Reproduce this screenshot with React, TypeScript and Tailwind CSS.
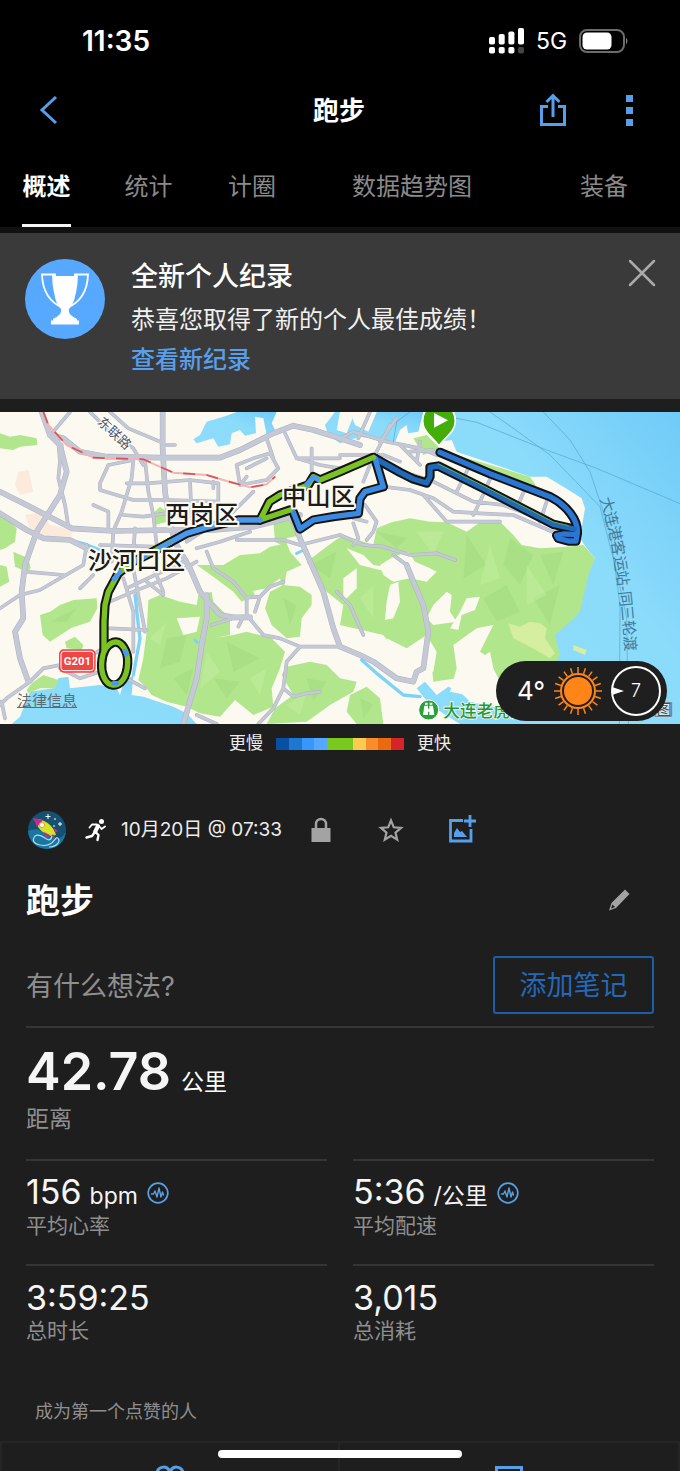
import React from "react";

const casing = "#141414";

const greens = [
  "M0 85 L30 95 60 90 110 100 112 120 60 125 40 135 0 130Z",
  "M0 335 L25 345 50 370 45 410 15 430 0 435Z M40 440 L85 460 92 490 80 500 45 485Z",
  "M455 330 L480 305 500 320 500 350 465 360Z",
  "M0 480 L20 485 28 530 0 545Z",
  "M120 630 L150 620 180 600 220 585 290 580 292 610 270 650 215 668 150 710 128 690Z",
  "M195 710 L225 695 250 720 245 735 200 730Z",
  "M80 855 L95 835 130 810 175 825 165 850 120 850 85 865Z",
  "M445 585 L480 570 540 590 590 600 595 570 635 560 640 590 690 640 690 690 640 700 700 690 740 680 815 700 855 740 840 790 815 850 820 905 760 930 705 885 660 935 600 925 560 905 500 890 455 870 440 850 415 825 430 760 440 680Z",
  "M670 480 L720 450 780 445 810 425 860 415 870 440 905 480 860 500 850 560 840 520 800 550 750 560 690 500Z",
  "M590 480 L680 480 750 540 765 570 725 590 700 560 640 515Z",
  "M810 560 L850 540 900 545 935 570 935 600 905 640 900 695 860 700 815 660 795 610Z",
  "M820 350 L900 345 905 390 860 400 860 430 825 410Z",
  "M920 470 L1000 410 1030 390 1120 420 1130 370 1175 352 1230 340 1290 350 1340 352 1400 380 1440 352 1500 350 1540 390 1565 420 1620 430 1700 425 1750 420 1785 460 1765 510 1740 620 1700 660 1665 690 1680 750 1640 820 1500 830 1480 790 1470 740 1440 760 1370 820 1300 830 1295 780 1270 720 1200 760 1150 690 1020 660 1030 600 980 560Z",
  "M860 785 L930 770 980 780 1020 820 1070 830 1060 860 990 900 920 950 800 957 825 910 880 870 845 810Z",
  "M1050 870 L1100 845 1140 880 1150 957 1070 957 1040 920Z",
  "M1240 100 L1280 90 1320 130 1270 150Z M1370 150 L1590 215 1610 245 1560 240 1430 185Z",
];

const clearings = [
  "M1140 480 L1180 455 1225 440 1245 470 1290 490 1310 500 1280 530 1230 520 1180 530 1150 510Z",
  "M1340 560 L1355 570 1350 620 1370 650 1300 660 1280 640 1300 600Z",
  "M1400 580 L1440 575 1425 615 1385 630 1375 675 1350 670 1380 620Z",
  "M1170 540 L1195 530 1200 590 1180 640 1155 645 1160 590Z",
  "M1360 720 L1430 670 1480 660 1460 700 1440 740 1470 760 1470 830 1400 870 1350 860 1370 790Z",
  "M1160 700 L1220 730 1280 690 1310 740 1300 800 1260 810 1180 780Z",
  "M1040 430 L1090 450 1120 480 1180 490 1160 500 1080 480Z",
  "M530 640 L600 635 590 680 550 690Z",
  "M1030 520 L1070 490 1070 550 1030 590Z",
];

const majorRoads = [
  "M125 21 L150 90 180 120 200 200 180 270 110 380 75 480 65 560 70 640 45 680 60 760 85 830",
  "M150 90 L190 100 240 140 320 155 480 158 660 158 720 135 820 85 880 62 940 75 1020 100 1080 120",
  "M488 21 L488 130 495 260 510 360 530 420 570 490 600 560 660 630 700 637 750 637",
  "M620 570 L620 640 605 720 590 820 550 957",
  "M0 260 L80 300 215 370 340 378 500 375 640 375 760 365 900 330",
  "M0 325 L80 375 130 400 210 405 300 450",
  "M1220 480 L1240 530 1270 600 1285 680 1270 790 1250 800 1240 830 1190 820 1120 770 1080 750 1020 725 1000 670 970 560 900 400 870 320",
];

const roads = [
  "M210 21 L160 80 M270 21 L330 80 400 130 430 180 M330 21 L385 70 480 110",
  "M185 120 L175 220 195 300 205 365 M175 110 L180 170",
  "M400 165 L395 220 365 320 340 378 335 470 M435 165 L445 260 460 330 470 420",
  "M300 235 L325 180 400 165 M300 235 L300 255 400 285 510 285 650 290 M380 235 L440 235 570 225 655 235 655 320",
  "M280 300 L325 320 325 370 M370 330 L430 335 500 325 M405 370 L400 440 M570 225 L575 340",
  "M710 180 L760 160 810 145 835 190 800 225 720 240 710 180 M800 100 L820 160 M855 85 L890 160 960 180 1020 190 M740 190 L800 160",
  "M500 120 L525 120 M640 250 L640 230 M935 130 L935 200 M890 160 L1020 160 M740 215 L725 235",
  "M760 260 L700 320 560 410 M710 405 L850 405 900 420 1020 390 M590 430 L660 410 750 380",
  "M300 420 L460 425 M260 420 L250 480 180 520 120 555 60 570 0 610 M75 500 L190 510",
  "M330 590 L400 560 500 520 590 470 M370 520 L400 620 400 740 M400 490 L435 680 M330 670 L440 675 M440 530 L490 570 M465 500 L490 560 M240 550 L280 510 M380 550 L560 465",
  "M620 440 L640 490 700 530 740 580 740 630 790 690 840 700 900 725 1020 725 M740 578 L780 575 810 545 850 530 M765 620 L780 575",
  "M900 725 L860 770 850 850 820 910 775 957 M850 850 L880 875 920 865 960 860 M635 660 L700 640 730 635 715 665",
  "M0 900 L20 880 90 830 130 790 180 780 220 790 300 735 M5 890 L15 940 M180 790 L240 820 300 800 M380 820 L435 850",
  "M1020 390 L1090 420 1150 425 1230 450 1310 445 1365 465 M1060 355 L1075 400 1060 420 M1095 300 L1130 350 1120 380 1100 405 M1060 340 L1100 350",
  "M1020 100 L1060 80 1160 110 1260 130 1310 150 M1140 110 L1190 40 M1170 60 L1110 180 1090 230 M1075 100 L1110 21 M1020 150 L1080 150 1150 150 1200 170 M1200 120 L1260 180 M1260 110 L1250 170 M1230 140 L1300 135",
  "M1150 245 L1230 255 1300 280 1360 320 1440 325 1540 330 1680 390 M1240 210 L1300 230 1420 290 1510 300 1590 330 M1410 180 L1370 260 M1480 200 L1440 290 1420 330 M1580 240 L1550 310 M1640 290 L1620 350 M1270 270 L1340 350 1500 350",
  "M1010 560 L1050 600 1090 690 M590 930 L650 957 M1180 450 L1220 480",
];

const railway = "M130 21 L145 60 200 120 280 158 430 163 520 203 620 210 680 228 750 247 800 238 825 215";

const routes = [
  { d: "M1320 142 L1470 206 1650 275 C1700 300 1735 345 1732 385 L1728 408 1705 408 1675 400 1670 391 1690 387 1725 388", c: "#2a76d2" },
  { d: "M1722 372 L1660 358 1450 250 1315 183 1290 187 1290 215 1280 234 1240 222 1200 202 1125 160", c: "#1f69b8" },
  { d: "M1125 160 L1150 245 1095 260 1080 280 1075 325 1000 335 940 345 900 372 880 322", c: "#3b8ae2" },
  { d: "M870 315 L780 345 808 290 840 270 925 240 940 215 960 225 1020 200 1120 157", c: "#7ac322" },
  { d: "M780 345 L715 345 620 367 560 385 510 412", c: "#4a99ee" },
  { d: "M510 412 L450 445 400 470 355 505 325 560 315 600 312 650 312 735", c: "#7ac322" },
  { d: "M340 712 C365 705 385 740 383 775 C381 820 360 842 338 840 C315 838 303 805 305 775 C307 740 318 720 340 712Z", c: "#7ac322" },
];

const palette = [
  "bg-[#0850a4]", "bg-[#1e78d2]", "bg-[#3a97fa]", "bg-[#55a8ff]", "bg-[#7ac81e]",
  "bg-[#7ac81e]", "bg-[#fbcb51]", "bg-[#fb8c2a]", "bg-[#ea6a10]", "bg-[#d8232a]",
];

const rayAngles = Array.from({ length: 20 }, (_, i) => i * 18);

function RouteMap() {
  return (
    <svg viewBox="0 21 2040 936" className="block w-full" role="img" aria-label="路线地图">
      <defs>
        <linearGradient id="sea" x1="0" x2="1" y1="1" y2="0">
          <stop offset="0" stopColor="#8edcfa" />
          <stop offset=".6" stopColor="#8bdbfb" />
          <stop offset="1" stopColor="#6fcbf7" />
        </linearGradient>
      </defs>
      <rect y="21" width="2040" height="936" fill="#fbf9f0" />
      <g fill="#fcebdc">
        <path d="M55 200 L85 195 100 260 60 270 45 240Z M75 330 L130 320 150 360 220 375 210 400 150 400 90 370Z" />
      </g>
      <g fill="url(#sea)">
        <path d="M600 90 L620 50 680 32 710 21 830 21 815 55 825 75 800 90 790 40 765 35 768 85 735 92 720 75 695 85 690 118 655 125 640 100 590 115 580 103Z" />
        <path d="M975 60 L1005 21 1050 21 1065 60 1105 80 1130 21 1270 21 1255 80 1225 85 1200 110 1150 105 1080 95 1020 115 985 90Z" />
        <path d="M1330 21 H2040 V957 H1480 L1500 900 1600 840 1665 780 1655 690 1700 610 1740 530 1750 490 1785 460 1760 430 1740 400 1755 310 1745 280 1690 245 1640 215 1590 215 1370 140 1355 105 1320 110Z" />
        <path d="M35 957 L60 935 90 860 160 850 175 820 205 815 210 850 300 840 350 850 360 870 370 835 400 810 395 870 430 875 520 905 560 925 590 957Z" />
        <path d="M1250 850 L1275 830 1310 870 1345 845 1380 860 1410 890 1500 910 1540 957 1380 957 1290 900Z" />
      </g>
      <path d="M1020 21 H1065 L1040 85 1010 75Z M1200 75 L1220 60 1225 90 1210 130 1180 125Z" fill="#fbf9f0" />
      <g fill="#b2e68d">
        {greens.map((d) => <path key={d} d={d} />)}
      </g>
      <g fill="#9fd97d" opacity=".45">
        <path d="M1130 380 L1220 400 1190 430Z M1400 390 L1460 480 1390 520Z M1530 400 L1600 450 1560 540 1510 480Z M1620 450 L1690 440 1660 540Z M1450 580 L1520 540 1560 620 1490 650Z M1600 580 L1680 540 1650 660Z M500 700 L560 690 540 770 480 790Z M680 710 L780 760 700 800Z M640 820 L720 830 680 880Z M520 820 L580 790 560 870Z M850 580 L890 600 870 660Z M150 650 L230 610 200 650Z M930 480 L1010 440 990 520Z M920 820 L980 830 940 890Z M1080 880 L1120 900 1090 940Z" />
      </g>
      <g fill="#c9f0a6" opacity=".4">
        <path d="M1250 380 L1330 380 1300 450Z M1470 420 L1500 520 1440 540Z M1580 480 L1640 570 1580 600Z M620 740 L660 800 600 850Z M450 700 L500 650 480 720Z M750 820 L800 790 780 870Z M1080 580 L1120 540 1120 640Z M860 900 L920 860 900 930Z" />
      </g>
      <path d="M1525 655 L1560 665 1590 650 1620 655 1640 670 1635 700 1665 745 1650 760 1590 725 1540 700Z M1720 720 L1760 735 1755 750 1720 735Z" fill="#d6ee9f" />
      <g fill="#fbf9f0">
        {clearings.map((d) => <path key={d} d={d} />)}
      </g>
      <g fill="none" strokeLinejoin="round" strokeLinecap="round">
        <path d="M405 570 L415 660 420 700 400 810 M1085 765 L1130 805 1210 870 1260 875" stroke="#7dd3f7" strokeWidth="10" />
        <path d="M190 400 L250 415 300 435 M890 445 L905 438 M585 705 L592 712" stroke="#7dd3f7" strokeWidth="9" />
        <g stroke="#aeb2c2">
          {roads.map((d) => <path key={d} d={d} strokeWidth="11" />)}
          {majorRoads.map((d) => <path key={d} d={d} strokeWidth="17" />)}
        </g>
        <g stroke="#c5c8d5">
          {roads.map((d) => <path key={d} d={d} strokeWidth="8" />)}
          {majorRoads.map((d) => <path key={d} d={d} strokeWidth="14" />)}
        </g>
        <path d={railway} stroke="#f3b4b4" strokeWidth="6" />
        <path d={railway} stroke="#d95358" strokeWidth="5" strokeDasharray="36 34" strokeLinecap="butt" />
        <g stroke="#55a5cb" strokeWidth="2">
          <path d="M1360 38 L1430 52 1640 135 1790 190 2040 296 M1470 21 L1540 70 1650 150 1800 305 1850 500 1880 640 1885 957 M1630 21 L1710 105 1770 200 1830 380 1860 600 1858 957 M1180 110 L1190 50 1230 21" />
        </g>
        {routes.map((r) => <path key={r.d} d={r.d} stroke={casing} strokeWidth="28" />)}
        {routes.map((r) => <path key={r.d} d={r.d} stroke={r.c} strokeWidth="16" />)}
        <path d="M1705 362 L1660 351 1455 245 1315 177" stroke="#6ea635" strokeWidth="3" />
        <path d="M920 238 L940 216 952 222 M510 413 L480 428 M435 455 L400 472 M360 500 L342 522 M375 738 L379 748 M340 835 L350 835" stroke="#4a99ee" strokeWidth="14" />
      </g>
      <path d="M1317 123 C1302 98 1268 82 1268 48 C1268 -20 1366 -20 1366 48 C1366 82 1332 98 1317 123Z" fill="#43ad09" stroke="#fff" strokeWidth="5" />
      <path d="M1302 24 L1344 46 1302 68Z" fill="#fff" />
      <g fontFamily="'Noto Sans CJK SC', sans-serif">
        <g fontSize="73" fontWeight="500" fill="#1b1b1b" stroke="#fbf9f0" strokeWidth="12" strokeLinejoin="round" paintOrder="stroke">
          <text x="846" y="301">中山区</text>
          <text x="496" y="354">西岗区</text>
          <text x="263" y="492">沙河口区</text>
        </g>
        <text transform="translate(290 54) rotate(43)" fontSize="40" fill="#505566" stroke="#fff" strokeWidth="6" paintOrder="stroke">东联路</text>
        <g fontSize="46" fill="#427a9d">
          <text transform="translate(1800 282) rotate(72)">大</text>
          <text transform="translate(1812 324) rotate(75)">连</text>
          <text transform="translate(1824 366) rotate(78)">港</text>
          <text transform="translate(1834 409) rotate(80)">客</text>
          <text transform="translate(1842 455) rotate(82)">运</text>
          <text transform="translate(1848 499) rotate(82)">站-</text>
          <text transform="translate(1858 560) rotate(84)">同</text>
          <text transform="translate(1864 602) rotate(85)">三轮渡</text>
        </g>
        <circle cx="1286" cy="915" r="30" fill="#27a13a" stroke="#fff" strokeWidth="3" />
        <g fill="#fff">
          <path d="M1273 902h11v9h4v-9h11l4 28h-15v-10h-4v10h-15zM1275 893h8v6h-8zM1289 893h8v6h-8z" />
        </g>
        <text x="1330" y="936" fontSize="50" fontWeight="500" fill="#27963d" stroke="#f4faec" strokeWidth="5" paintOrder="stroke">大连老虎滩</text>
        <text x="1970" y="930" fontSize="45" fill="#454545" stroke="#eef9fc" strokeWidth="3" paintOrder="stroke">图</text>
        <path d="M1965 893h50v41h-50z" fill="none" stroke="#777" strokeWidth="3" />
      </g>
      <rect x="177" y="733" width="110" height="70" rx="14" fill="#ee4545" />
      <rect x="183" y="739" width="98" height="58" rx="9" fill="#ee4545" stroke="#fff" strokeWidth="3" />
      <text x="232" y="781" textAnchor="middle" fontFamily="Roboto, sans-serif" fontWeight="700" fontSize="34" fill="#fff">G201</text>
    </svg>
  );
}

function WeatherPill() {
  return (
    <div className="absolute right-[13px] bottom-[3px] flex h-[60px] w-[171px] items-center rounded-full bg-[#1f1f1f] pl-[21px]">
      <span className="w-9 text-[26px] leading-8 text-white">4°</span>
      <svg viewBox="0 0 50 50" className="h-[50px] w-[50px]" role="img" aria-label="晴">
        <circle cx="25" cy="25" r="14" fill="#ff8519" />
        <g fill="none" stroke="#ff8519">
          <circle cx="25" cy="25" r="17" strokeWidth="2" />
          {rayAngles.map((a) => <path key={a} d="M25 1V7" strokeWidth="1.500" transform={`rotate(${a} 25 25)`} />)}
        </g>
      </svg>
      <svg viewBox="0 0 50 50" className="ml-2 h-[50px] w-[50px]" role="img" aria-label="风速 7">
        <circle cx="25" cy="25" r="24" fill="none" stroke="#fff" strokeWidth="2" />
        <path d="M1 21 L13 25 1 29Z" fill="#fff" />
        <text x="25" y="31" textAnchor="middle" fontSize="18" fontWeight="300" fill="#fff">7</text>
      </svg>
    </div>
  );
}

function PulseIcon() {
  return (
    <svg viewBox="0 0 22 22" className="ml-[9px] h-[22px] w-[22px]" fill="none" stroke="#579fe6" aria-hidden="true">
      <circle cx="11" cy="11" r="9.800" strokeWidth="1.700" />
      <path d="M4.500 12h2l1.500-3 2 6 2-9 2 9 1.500-5 1 3" strokeWidth="1.400" strokeLinejoin="round" strokeLinecap="round" />
    </svg>
  );
}

type StatProps = { value: string; unit?: string; label: string; pulse?: boolean };

function Stat({ value, unit, label, pulse }: StatProps) {
  return (
    <div className="flex h-[105px] flex-col-reverse justify-end border-t-2 border-[#353535] pt-3">
      <dt className="text-[21px] leading-[26px] text-[#8f8f8f]">{label}</dt>
      <dd className="flex h-10 items-center">
        <span className="flex items-baseline">
          <span className="text-[34px] leading-10 text-[#f5f5f5]">{value}</span>
          {unit && <span className="ml-2 text-[23px] text-[#f5f5f5]">{unit}</span>}
        </span>
        {pulse && <PulseIcon />}
      </dd>
    </div>
  );
}

function StatusBar() {
  return (
    <div className="flex h-20 items-center justify-between pt-[2px] pr-[51px] pl-[82px] text-white">
      <span className="text-[28px] font-semibold">11:35</span>
      <div className="flex items-center">
        <svg viewBox="0 0 36 26" className="h-[26px] w-9" fill="#fff" aria-hidden="true">
          <rect x="0" y="9" width="6" height="7.500" rx="1.800" />
          <rect x="9.700" y="6" width="6" height="10.500" rx="1.800" />
          <rect x="19.400" y="3.500" width="6" height="13" rx="1.800" />
          <rect x="29" y="0" width="6" height="16.500" rx="1.800" />
          <rect x="0" y="19" width="6" height="6.500" rx="1.800" />
          <rect x="9.700" y="19" width="6" height="6.500" rx="1.800" />
          <rect x="19.400" y="19" width="6" height="6.500" rx="1.800" />
          <rect x="29" y="19" width="6" height="6.500" rx="1.800" fill="#444" />
        </svg>
        <span className="ml-[11px] w-[43px] text-[23px]">5G</span>
        <svg viewBox="0 0 50 24" className="h-6 w-[50px]" aria-hidden="true">
          <rect x="1" y="1" width="44" height="22" rx="7" fill="none" stroke="#6c6c6c" strokeWidth="2" />
          <rect x="3.500" y="3.500" width="29" height="17" rx="4.500" fill="#fff" />
          <path d="M47 8.500q3 3.500 0 7z" fill="#7c7c7c" />
        </svg>
      </div>
    </div>
  );
}

export default function App() {
  return (
    <div className="flex flex-col bg-[#1e1e1e] font-['Inter','Noto_Sans_CJK_SC',sans-serif] text-white">
      <header className="border-b-6 border-[#111] bg-black">
        <StatusBar />
        <div className="grid h-[60px] grid-cols-[1fr_auto_1fr] items-center pr-[40px] pl-[38px]">
          <button aria-label="返回" className="flex h-10 w-5 items-center">
            <svg viewBox="0 0 20 30" className="h-[30px] w-5" fill="none" stroke="#579fea" strokeWidth="3"><path d="M18 2 4 15 18 28" /></svg>
          </button>
          <h1 className="pt-px text-[26px] leading-10 font-bold">跑步</h1>
          <div className="flex items-center justify-end gap-[51px]">
            <button aria-label="分享">
              <svg viewBox="0 0 28 34" className="h-[34px] w-7" fill="none" stroke="#579fea" strokeWidth="3">
                <path d="M9 13.500H2.500V31.500H25.500V13.500H19M14 24V3M7.500 9 14 2.500 20.500 9" />
              </svg>
            </button>
            <button aria-label="更多" className="flex w-[22px] flex-col items-center gap-[5px]">
              <span className="h-[7px] w-[7px] bg-[#579fea]" />
              <span className="h-[7px] w-[7px] bg-[#579fea]" />
              <span className="h-[7px] w-[7px] bg-[#579fea]" />
            </button>
          </div>
        </div>
        <nav className="grid h-[87px] grid-cols-[97fr_103fr_104fr_216fr_160fr] text-[24px] text-[#8a8a8a]">
          <button className="ml-[22px] flex w-[49px] flex-col items-center justify-end font-bold whitespace-nowrap text-white">
            <span className="mb-[19px] leading-9">概述</span>
            <span className="h-[3px] w-full bg-[#f5f5f5]" />
          </button>
          <button className="flex items-end justify-center pb-[22px] leading-9">统计</button>
          <button className="flex items-end justify-center pb-[22px] leading-9">计圈</button>
          <button className="flex items-end justify-center pb-[22px] leading-9">数据趋势图</button>
          <button className="flex items-end justify-center pb-[22px] pl-2 leading-9">装备</button>
        </nav>
      </header>

      <section className="mb-[13px] flex h-[166px] items-start bg-[#3a3a3a] pt-[26px] pr-6 pl-[25px]">
        <svg viewBox="0 0 80 80" className="h-20 w-20 shrink-0" aria-hidden="true">
          <circle cx="40" cy="40" r="40" fill="#56a9ff" />
          <path d="M29 17H51V20C51 37 50 43 44 50C43 54 46 57 52 60V62H28V60C34 57 37 54 36 50C30 43 29 37 29 20Z" fill="#fff" />
          <path d="M30 18V15.500H17C17.500 31 24 43 38 49M50 18V15.500H63C62.500 31 56 43 42 49M28 16C28 30 30 38 35 45M52 16C52 30 50 38 45 45" fill="none" stroke="#fff" strokeWidth="1.800" />
          <path d="M26 61.500h28v4H26z" fill="#fff" />
        </svg>
        <div className="ml-[26px] flex-1">
          <h2 className="text-[27px] leading-9 font-medium">全新个人纪录</h2>
          <p className="mt-[7px] text-[24px] leading-9 text-[#f0f0f0]">恭喜您取得了新的个人最佳成绩！</p>
          <a href="#records" className="mt-1 inline-block text-[24px] leading-9 font-medium text-[#579fea]">查看新纪录</a>
        </div>
        <button aria-label="关闭">
          <svg viewBox="0 0 28 28" className="h-7 w-7" stroke="#aaa" strokeWidth="2.500" strokeLinecap="round"><path d="M2 2 26 26M26 2 2 26" /></svg>
        </button>
      </section>

      <section>
        <div className="relative overflow-hidden">
          <RouteMap />
          <a href="#legal" className="absolute bottom-[11px] left-[17px] text-[15px] leading-6 text-[#5d6b70] underline">法律信息</a>
          <WeatherPill />
        </div>
        <div className="flex h-[38px] items-center justify-center gap-[13px] pt-px text-[17px] text-[#eee]">
          <span>更慢</span>
          <div className="flex h-3 w-[128px]">
            {palette.map((c, i) => <span key={i} className={"flex-1 " + c} />)}
          </div>
          <span>更快</span>
        </div>
      </section>

      <main className="px-[26px] pt-[44px]">
        <div className="flex h-12 items-center">
          <svg viewBox="0 0 38 38" className="ml-[2px] h-[38px] w-[38px]" role="img" aria-label="头像">
            <defs><clipPath id="avatar"><circle cx="19" cy="19" r="19" /></clipPath></defs>
            <g clipPath="url(#avatar)">
              <rect width="38" height="38" fill="#155170" />
              <path d="M0 20 Q10 15 20 24 T38 21 V38 H0Z" fill="#1b75a0" />
              <path d="M7 8 C14 7 25 13 28 24 L23 25 C14 22 8 16 7 8Z" fill="#d6e524" />
              <path d="M5 7 L15 9 9 16Z M26 17 L30 20 27 22Z M16 21 L22 24 18 27Z M25 23 L28 29 23 25Z" fill="#c52a8b" />
              <circle cx="14" cy="14" r="2.600" fill="#fff" stroke="#ed9c28" />
              <path d="M24 25 C21 36 15 20 7 25 C0 34 17 36 22 33 C28 30 28 23 31 29 C31 34 25 36 21 36" fill="none" stroke="#a9e1f0" strokeWidth="1.200" />
              <path d="M20 3v5M17.500 5.500h5M32 11v4M30 13h4M27 7v2M26 14v2" stroke="#fff" strokeWidth="1" />
            </g>
          </svg>
          <svg viewBox="0 0 24 24" className="ml-[18px] h-6 w-6" role="img" aria-label="跑步">
            <circle cx="17.500" cy="3.500" r="2.500" fill="#fff" />
            <g fill="none" stroke="#fff" strokeLinecap="round" strokeLinejoin="round">
              <path d="M14 8 L11 14" strokeWidth="4" />
              <path d="M13 6.500 L8 6.500 5.500 9.500 M15 8 L17.500 11 21 8.500" strokeWidth="1.800" />
              <path d="M11.500 14 L14.500 17 13.500 22 M10.500 14.500 L8 18 2.500 19.500" strokeWidth="2.400" />
            </g>
          </svg>
          <time className="ml-[13px] w-[190px] text-[19px] whitespace-nowrap text-[#eee]">10月20日 @ 07:33</time>
          <svg viewBox="0 0 20 26" className="h-[26px] w-5" role="img" aria-label="私密">
            <path d="M0.500 11h19v14h-19z" fill="#a3a3a3" />
            <path d="M5 12V7a5 5 0 0 1 10 0v5" fill="none" stroke="#a3a3a3" strokeWidth="2.500" />
          </svg>
          <button aria-label="收藏" className="ml-[46px]">
            <svg viewBox="0 0 28 28" className="h-7 w-7" fill="none" stroke="#a3a3a3" strokeWidth="2.200"><path d="M14 4.500 16.800 11.300 24 11.900 18.500 16.600 20.200 23.700 14 19.900 7.800 23.700 9.500 16.600 4 11.900 11.200 11.300Z" /></svg>
          </button>
          <button aria-label="添加照片" className="ml-[43px] mb-[2px]">
            <svg viewBox="0 0 28 28" className="h-7 w-7" fill="none" stroke="#579fea" strokeWidth="2.800">
              <path d="M15 5.500H2.500V26H23V14M22 0V12M16 6H28" />
              <path d="M6 22V18L9 13 12 17 14 16 19 22Z" fill="#579fea" stroke="none" />
            </svg>
          </button>
        </div>

        <div className="mt-[18px] flex h-14 items-center justify-between">
          <h2 className="pt-[2px] text-[34px] leading-[56px] font-bold">跑步</h2>
          <button aria-label="编辑" className="mr-6">
            <svg viewBox="0 0 22 22" className="h-[22px] w-[22px]" fill="#a3a3a3"><path d="M17 0.500 21.500 5 8 19 1 21.500 3.500 14ZM4.500 15.500 3 19.500 7 18Z" fillRule="evenodd" /></svg>
          </button>
        </div>

        <div className="mt-7 flex h-[72px] items-start justify-between border-b-2 border-[#353535]">
          <p className="pt-[2px] text-[27px] leading-[58px] text-[#8f8f8f]">有什么想法?</p>
          <button className="h-[58px] w-[161px] rounded-[3px] border-2 border-[#1e5da8] pt-[3px] text-[27px] text-[#2468b8]">添加笔记</button>
        </div>

        <dl>
          <div className="flex h-[131px] flex-col-reverse justify-end pt-3">
            <dt className="text-[23px] leading-8 text-[#8f8f8f]">距离</dt>
            <dd className="flex h-[63px] items-baseline">
              <span className="text-[52px] leading-[64px] font-semibold text-[#f5f5f5]">42.78</span>
              <span className="ml-[10px] text-[23px]">公里</span>
            </dd>
          </div>
          <div className="grid grid-cols-2 gap-x-[26px]">
            <Stat value="156" unit="bpm" label="平均心率" pulse />
            <Stat value="5:36" unit="/公里" label="平均配速" pulse />
            <Stat value="3:59:25" label="总时长" />
            <Stat value="3,015" label="总消耗" />
          </div>
        </dl>
        <p className="mt-[27px] mb-[13px] pl-[9px] text-[18px] leading-8 text-[#8f8f8f]">成为第一个点赞的人</p>
      </main>

      <footer className="relative grid h-[30px] grid-cols-2 overflow-hidden border-2 border-b-0 border-[#252525]">
        <button aria-label="点赞" className="flex justify-center border-r-2 border-[#252525] pt-[22px]">
          <svg viewBox="0 0 30 28" className="h-7 w-[30px] shrink-0" fill="none" stroke="#579fea" strokeWidth="3"><path d="M15 26C2 16 1 11 2 7 4 1 12 0 15 7 18 0 26 1 28 7 29 11 28 16 15 26Z" /></svg>
        </button>
        <button aria-label="评论" className="flex justify-center pt-[22px]">
          <svg viewBox="0 0 28 28" className="h-7 w-7 shrink-0" fill="none" stroke="#579fea" strokeWidth="3"><path d="M1.500 2.500H26.500V20H12L6 26V20H1.500Z" /></svg>
        </button>
        <div className="absolute top-[7px] left-1/2 h-2 w-[244px] -translate-x-1/2 rounded-full bg-white" />
      </footer>
    </div>
  );
}
